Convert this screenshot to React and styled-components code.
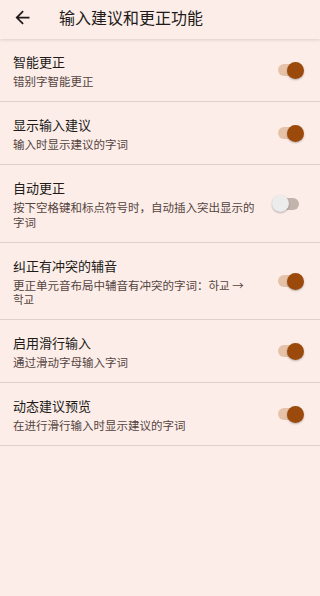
import React, {useState} from 'react';
import styled, {createGlobalStyle} from 'styled-components';

const GlobalStyle = createGlobalStyle`
    html, body {
        margin: 0;
        padding: 0;
        background: #fcede8;
    }
    body {
        font-family: "Noto Sans CJK SC", Roboto, sans-serif;
        color: #201a18;
    }
`

const Page = styled.div`
    width: 320px;
    min-height: 596px;
    background: #fcede8;
`

const Header = styled.header`
    height: 39px;
    display: flex;
    align-items: center;
    padding-left: 12px;
    background: #fcede8;
    box-shadow: 0 1px 3px rgba(90, 60, 50, 0.18);
    position: relative;
    z-index: 1;
`

const BackButton = styled.button`
    width: 21px;
    height: 21px;
    padding: 0;
    border: none;
    background: none;
    display: flex;
    color: #201a18;
    margin-top: -5px;
`

const Title = styled.h1`
    margin: -5px 0 0 26px;
    font-size: 16px;
    font-weight: 400;
    line-height: 20px;
`

const Row = styled.div`
    display: flex;
    align-items: center;
    padding: 13px 16px 12.5px 13px;
    border-bottom: 1px solid #ddcfca;
`

const Texts = styled.div`
    flex: 1;
    padding-right: 14px;
`

const RowTitle = styled.div`
    font-size: 13px;
    line-height: 20px;
    color: #201a18;
`

const RowSummary = styled.div`
    margin-top: 2px;
    font-size: 11.5px;
    line-height: 14.5px;
    color: #54443f;
`

// korean words must not split per syllable
const Word = styled.span`
    white-space: nowrap;
`

const Track = styled.div`
    position: relative;
    width: 32px;
    height: 17px;
    flex-shrink: 0;
    cursor: pointer;
    &::before {
        content: '';
        position: absolute;
        left: 6px;
        top: 2.5px;
        width: 21px;
        height: 12px;
        border-radius: 6px;
        background: ${p => p.on ? '#e6c3a8' : '#c2b3ad'};
    }
`

const Thumb = styled.div`
    position: absolute;
    top: 0;
    left: ${p => p.on ? '15px' : '0'};
    width: 17px;
    height: 17px;
    border-radius: 50%;
    background: ${p => p.on ? '#9b4a0b' : '#ececec'};
    box-shadow: 0 1px 2px rgba(0, 0, 0, 0.28);
`

const Switch = ({on, onToggle}) => (
    <Track on={on} onClick={onToggle}>
        <Thumb on={on}/>
    </Track>
)

const items = [
    {title: '智能更正', summary: '错别字智能更正', on: true},
    {title: '显示输入建议', summary: '输入时显示建议的字词', on: true},
    {title: '自动更正', summary: '按下空格键和标点符号时，自动插入突出显示的字词', on: false},
    {
        title: '纠正有冲突的辅音',
        summary: <>更正单元音布局中辅音有冲突的字词：<Word>하교</Word> → <Word>학교</Word></>,
        on: true
    },
    {title: '启用滑行输入', summary: '通过滑动字母输入字词', on: true},
    {title: '动态建议预览', summary: '在进行滑行输入时显示建议的字词', on: true},
]

export default function App() {
    const [state, setState] = useState(items.map(i => i.on));

    const toggle = (idx) => {
        setState(state.map((v, i) => i === idx ? !v : v));
    }

    return (
        <Page>
            <GlobalStyle/>
            <Header>
                <BackButton aria-label="返回">
                    <svg width="21" height="21" viewBox="0 0 24 24">
                        <path fill="currentColor" d="M20 11H7.83l5.59-5.59L12 4l-8 8 8 8 1.41-1.41L7.83 13H20v-2z"/>
                    </svg>
                </BackButton>
                <Title>输入建议和更正功能</Title>
            </Header>
            <div>
                {items.map((item, i) => (
                    <Row key={item.title}>
                        <Texts>
                            <RowTitle>{item.title}</RowTitle>
                            <RowSummary>{item.summary}</RowSummary>
                        </Texts>
                        <Switch on={state[i]} onToggle={() => toggle(i)}/>
                    </Row>
                ))}
            </div>
        </Page>
    )
}
